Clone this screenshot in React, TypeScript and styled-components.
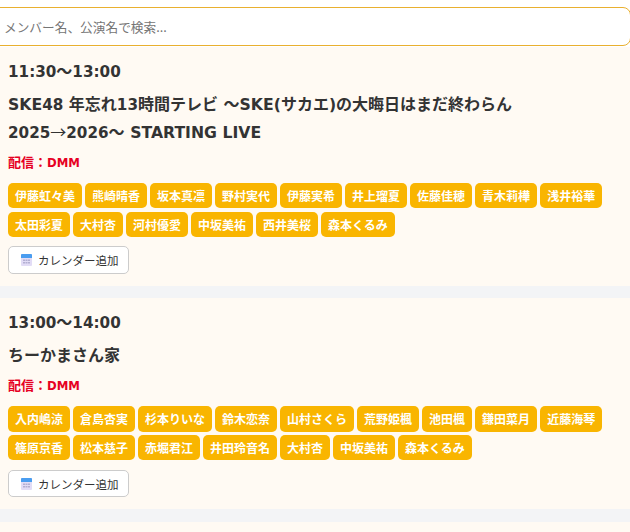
import React from "react";
import styled, { createGlobalStyle } from "styled-components";

type EventType = {
  time: string;
  title: string;
  channel: string;
  members: string[];
};

const events: EventType[] = [
  {
    time: "11:30〜13:00",
    title: "SKE48 年忘れ13時間テレビ 〜SKE(サカエ)の大晦日はまだ終わらん 2025→2026〜 STARTING LIVE",
    channel: "配信：DMM",
    members: [
      "伊藤虹々美",
      "熊崎晴香",
      "坂本真凛",
      "野村実代",
      "伊藤実希",
      "井上瑠夏",
      "佐藤佳穂",
      "青木莉樺",
      "浅井裕華",
      "太田彩夏",
      "大村杏",
      "河村優愛",
      "中坂美祐",
      "西井美桜",
      "森本くるみ",
    ],
  },
  {
    time: "13:00〜14:00",
    title: "ちーかまさん家",
    channel: "配信：DMM",
    members: [
      "入内嶋涼",
      "倉島杏実",
      "杉本りいな",
      "鈴木恋奈",
      "山村さくら",
      "荒野姫楓",
      "池田楓",
      "鎌田菜月",
      "近藤海琴",
      "篠原京香",
      "松本慈子",
      "赤堀君江",
      "井田玲音名",
      "大村杏",
      "中坂美祐",
      "森本くるみ",
    ],
  },
];

// digits and letters need different scales next to the CJK text
const withLatin = (text: string) =>
  text.split(/([0-9:]+|[A-Za-z()]+|→)/).map((part, index) => {
    if (index % 2 === 0) return part;
    if (part === "→") return <Arrow key={index}>{part}</Arrow>;
    return /^[0-9:]/.test(part) ? (
      <Digits key={index}>{part}</Digits>
    ) : (
      <Letters key={index}>{part}</Letters>
    );
  });

const CalendarIcon = () => (
  <svg width="11" height="12" viewBox="0 0 11 12" aria-hidden="true">
    <rect x="0" y="0" width="11" height="12" rx="1" fill="#e2dcf6" />
    <path d="M1 0h9a1 1 0 0 1 1 1v3H0V1a1 1 0 0 1 1-1z" fill="#4a9df0" />
    <path
      d="M2 5.5h2v1.5H2zM4.5 5.5h2v1.5h-2zM7 5.5h2v1.5H7zM2 8h2v1.5H2zM4.5 8h2v1.5h-2zM7 8h2v1.5H7z"
      fill="#b3afd2"
    />
  </svg>
);

export default function App() {
  return (
    <>
      <GlobalStyle />
      <SearchWrapper>
        <SearchInput placeholder="メンバー名、公演名で検索..." />
      </SearchWrapper>
      <EventList>
        {events.map((event) => (
          <EventCard key={event.time}>
            <EventTime>{withLatin(event.time)}</EventTime>
            <EventTitle>{withLatin(event.title)}</EventTitle>
            <EventChannel>{withLatin(event.channel)}</EventChannel>
            <MemberList>
              {event.members.map((member) => (
                <MemberTag key={member}>{member}</MemberTag>
              ))}
            </MemberList>
            <CalendarButton>
              <CalendarIcon />
              カレンダー追加
            </CalendarButton>
          </EventCard>
        ))}
        <EmptyCard />
      </EventList>
    </>
  );
}

const GlobalStyle = createGlobalStyle`
  html, body {
    margin: 0;
    height: 100%;
    overflow: hidden;
    background: #ffffff;
  }

  body {
    font-family: "DejaVu Sans", "Noto Sans CJK JP", sans-serif;
    color: #333333;
  }
`;

const Digits = styled.span`
  font-size: 0.95em;
`;

const Letters = styled.span`
  font-size: 0.98em;
`;

const Arrow = styled.span`
  font-family: "Noto Sans CJK JP", sans-serif;
  font-weight: 400;
  line-height: 1;
`;

const SearchWrapper = styled.div`
  padding-top: 7px;
  margin-left: -10px;
  margin-right: -1px;
`;

const SearchInput = styled.input`
  display: block;
  width: 100%;
  height: 39px;
  box-sizing: border-box;
  padding: 0 10px 0 13px;
  border: 1px solid #e9b02f;
  border-radius: 8px;
  background: #ffffff;
  font-family: "Noto Sans CJK JP", sans-serif;
  font-size: 12.7px;
  outline: none;

  ::placeholder {
    color: #757575;
  }
`;

const EventList = styled.div`
  display: flex;
  flex-direction: column;
  gap: 12.4px;
  margin-top: 1px;
  background: #f3f4f6;
`;

const EventCard = styled.section`
  background: #fffaf3;
  padding: 12px 8px;
`;

const EmptyCard = styled.div`
  background: #fffaf3;
  height: 100px;
`;

const EventTime = styled.div`
  font-size: 16px;
  font-weight: 700;
  line-height: 26px;
`;

const EventTitle = styled.h2`
  margin: 6px 0 0;
  font-size: 16px;
  font-weight: 700;
  line-height: 28px;
`;

const EventChannel = styled.p`
  margin: 6px 0 0;
  color: #e60023;
  font-size: 13px;
  font-weight: 700;
  line-height: 20px;

  ${Letters} {
    font-size: 0.9em;
  }
`;

const MemberList = styled.div`
  display: flex;
  flex-wrap: wrap;
  gap: 3.6px 3px;
  margin-top: 10px;
`;

const MemberTag = styled.span`
  padding: 0 7px;
  border-radius: 5px;
  background: #f9b500;
  color: #ffffff;
  font-family: "Noto Sans CJK JP", sans-serif;
  font-size: 12px;
  font-weight: 700;
  line-height: 25.2px;
`;

const CalendarButton = styled.button`
  display: flex;
  align-items: center;
  gap: 6px;
  height: 27.6px;
  margin-top: 9.4px;
  padding: 0 9px 0 12px;
  border: 1px solid #cccccc;
  border-radius: 5px;
  background: #ffffff;
  color: #333333;
  font-family: "Noto Sans CJK JP", sans-serif;
  font-size: 11.5px;
`;
